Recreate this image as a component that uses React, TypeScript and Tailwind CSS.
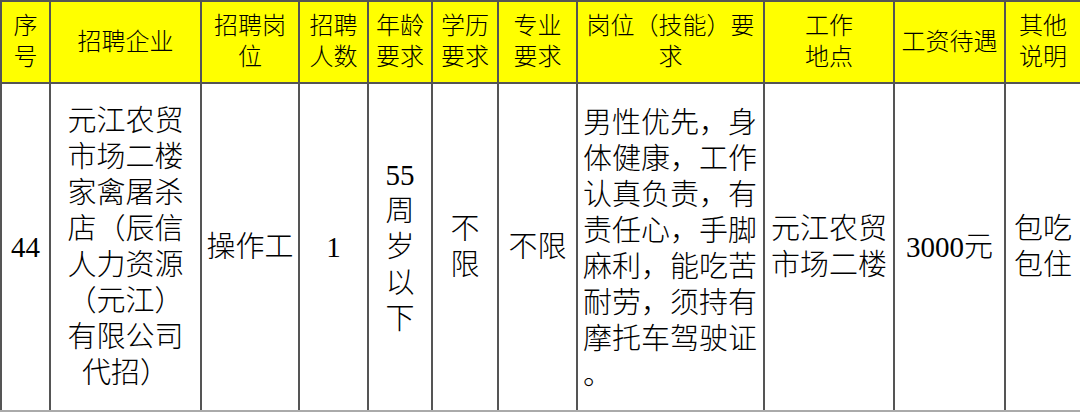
const cols = [49, 151, 98, 69, 64, 66, 79, 187, 130, 111, 76];

const headers: string[][] = [
  ["序", "号"],
  ["招聘企业"],
  ["招聘岗", "位"],
  ["招聘", "人数"],
  ["年龄", "要求"],
  ["学历", "要求"],
  ["专业", "要求"],
  ["岗位（技能）要", "求"],
  ["工作", "地点"],
  ["工资待遇"],
  ["其他", "说明"],
];

const row: string[][] = [
  ["44"],
  ["元江农贸", "市场二楼", "家禽屠杀", "店（辰信", "人力资源", "（元江）", "有限公司", "代招）"],
  ["操作工"],
  ["1"],
  ["55", "周", "岁", "以", "下"],
  ["不", "限"],
  ["不限"],
  [],
  ["元江农贸", "市场二楼"],
  ["3000元"],
  ["包吃", "包住"],
];

const requirement = [
  "男性优先，身",
  "体健康，工作",
  "认真负责，有",
  "责任心，手脚",
  "麻利，能吃苦",
  "耐劳，须持有",
  "摩托车驾驶证",
  "。",
];

function Lines({ lines }: { lines: string[] }) {
  return (
    <>
      {lines.map((l, i) => (
        <div key={i} className="whitespace-nowrap">
          {l}
        </div>
      ))}
    </>
  );
}

export default function App() {
  return (
    <div
      className="w-[1080px] h-[412px] bg-white overflow-hidden text-black"
      style={{ fontFamily: '"Liberation Serif", "Noto Sans CJK SC", serif' }}
    >
      <table className="table-fixed border-collapse w-[1080px]">
        <colgroup>
          {cols.map((w, i) => (
            <col key={i} style={{ width: w }} />
          ))}
        </colgroup>
        <thead>
          <tr className="h-[82px] bg-[#ffff00]">
            {headers.map((h, i) => (
              <th
                key={i}
                className="border-2 border-[#555555] p-0 text-center align-middle font-light text-[24px] leading-[31px]"
              >
                <Lines lines={h} />
              </th>
            ))}
          </tr>
        </thead>
        <tbody>
          <tr className="h-[328px]">
            {row.map((cell, i) =>
              i === 7 ? (
                <td
                  key={i}
                  className="border-2 border-[#555555] border-b-[#aaaaaa] pl-[5px] pt-[4px] text-left align-middle font-light text-[29px] leading-[36px]"
                >
                  <Lines lines={requirement} />
                </td>
              ) : (
                <td
                  key={i}
                  className="border-2 border-[#555555] border-b-[#aaaaaa] p-0 text-center align-middle font-light text-[29px] leading-[36px]"
                >
                  <Lines lines={cell} />
                </td>
              )
            )}
          </tr>
        </tbody>
      </table>
    </div>
  );
}
